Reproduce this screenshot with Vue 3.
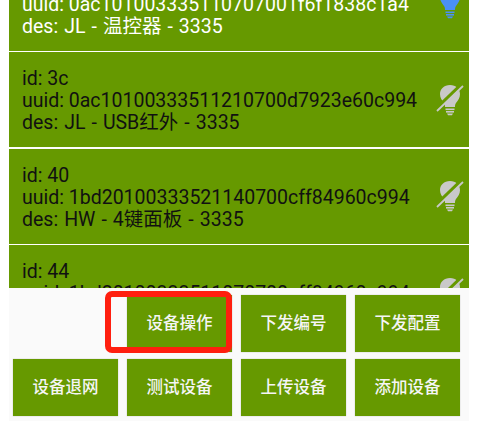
<template>
  <div class="screen">
    <div class="list">
      <div class="list-inner">
        <div v-for="d in devices" :key="d.id" class="device" :class="{ online: d.online }">
          <div class="info">
            <div>id: {{ d.id }}</div>
            <div>uuid: {{ d.uuid }}</div>
            <div class="des">des: {{ d.des }}</div>
          </div>
          <svg class="bulb" viewBox="0 0 28 32" width="28" height="32">
            <path :fill="d.online ? '#4a90f5' : '#c9c9c9'" d="M14 1C8 1 4 5 4 10c0 4 2 6 4 9 1 1 1 3 1 4h10c0-1 0-3 1-4 2-3 4-5 4-9 0-5-4-9-10-9z" />
            <rect :fill="d.online ? '#4a90f5' : '#c9c9c9'" x="9.5" y="24.5" width="9" height="1.6" />
            <rect :fill="d.online ? '#4a90f5' : '#c9c9c9'" x="10" y="27" width="8" height="1.6" />
            <path :fill="d.online ? '#4a90f5' : '#c9c9c9'" d="M11 29.5h6l-1 1.8h-4z" />
            <path v-if="!d.online" stroke="#669900" stroke-width="3.6" d="M0 25 26 0" />
            <path v-if="!d.online" stroke="#c9c9c9" stroke-width="1.8" d="M1 27 27 2" />
          </svg>
        </div>
      </div>
    </div>
    <div class="panel">
      <button v-for="b in buttons" :key="b.label" class="action" :style="{ gridColumn: b.col }">
        {{ b.label }}
        <span v-if="b.marked" class="marker"></span>
      </button>
    </div>
  </div>
</template>

<script setup>
const devices = [
  { id: '38', uuid: '0ac101003335110707001f6f1838c1a4', des: 'JL - 温控器 - 3335', online: true },
  { id: '3c', uuid: '0ac10100333511210700d7923e60c994', des: 'JL - USB红外 - 3335', online: false },
  { id: '40', uuid: '1bd20100333521140700cff84960c994', des: 'HW - 4键面板 - 3335', online: false },
  { id: '44', uuid: '1bd20100333511070700cff84960c994', des: 'HW - 4键面板 - 3335', online: false }
]

const buttons = [
  { label: '设备操作', col: 2, marked: true },
  { label: '下发编号', col: 3 },
  { label: '下发配置', col: 4 },
  { label: '设备退网', col: 1 },
  { label: '测试设备', col: 2 },
  { label: '上传设备', col: 3 },
  { label: '添加设备', col: 4 }
]
</script>

<style>
html, body {
  margin: 0;
  background: #fff;
}
</style>

<style scoped>
.screen {
  width: 485px;
  height: 421px;
  overflow: hidden;
  font-family: Roboto, "Noto Sans CJK SC", sans-serif;
}

.list {
  width: 460px;
  height: 288px;
  margin-left: 9px;
  overflow: hidden;
}

.list-inner {
  margin-top: -44.5px;
}

.device {
  display: flex;
  align-items: center;
  justify-content: space-between;
  height: 95px;
  box-sizing: border-box;
  padding: 0 5px 0 13px;
  margin-bottom: 1.5px;
  background: #669900;
  color: #111;
  font-size: 19.5px;
  line-height: 22px;
  white-space: nowrap;
}

.device.online {
  color: #fff;
}

.info {
  padding-top: 3px;
}

.des {
  word-spacing: 1.2px;
}

.bulb {
  flex: none;
}

.panel {
  width: 460px;
  height: 133px;
  margin-left: 9px;
  box-sizing: border-box;
  padding: 7px 9px 5px 4px;
  background: #fafafa;
  display: grid;
  grid-template-columns: repeat(4, 105px);
  grid-auto-rows: 57px;
  column-gap: 9px;
  row-gap: 7px;
}

.action {
  position: relative;
  border: none;
  padding: 0 0 3px;
  background: #669900;
  color: #f5f5f5;
  font-family: inherit;
  font-size: 16.5px;
  font-weight: 500;
  box-shadow: 0 0 1px rgba(0, 0, 0, 0.3);
}

.marker {
  position: absolute;
  left: -22px;
  top: -4px;
  width: 127px;
  height: 62px;
  box-sizing: border-box;
  border: 6px solid #ff1f0f;
  border-radius: 7px;
}
</style>
